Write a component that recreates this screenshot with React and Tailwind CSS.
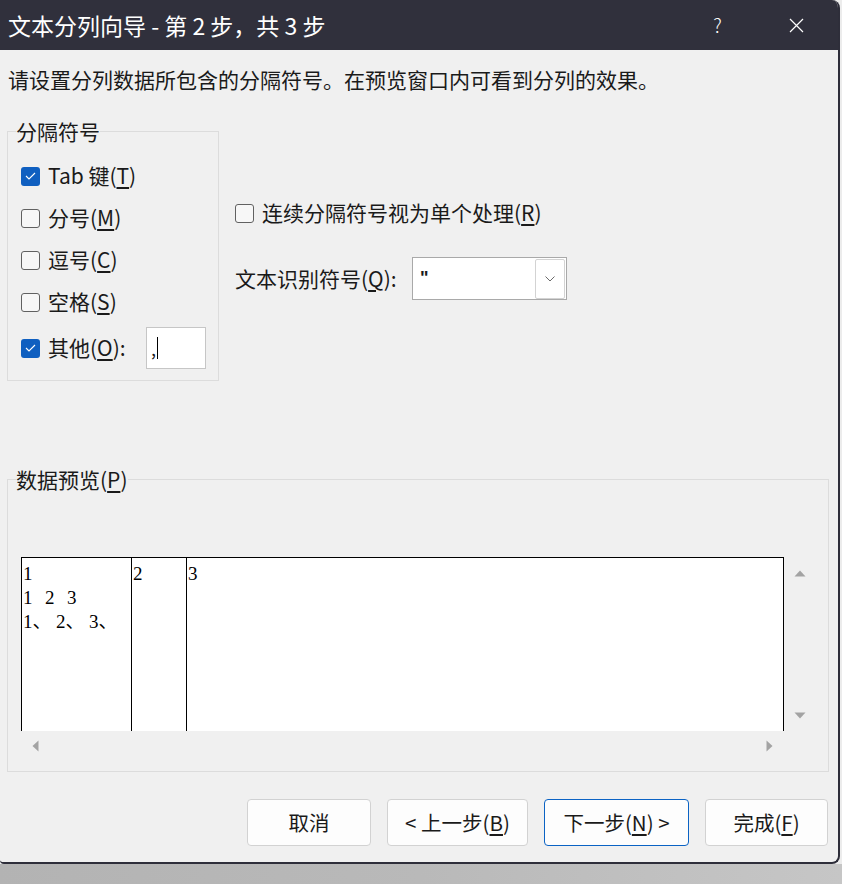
import React from "react";

const Check = ({ checked }) =>
  checked ? (
    <span className="w-[19px] h-[19px] shrink-0 rounded-[3px] bg-[#0f5fc0] flex items-center justify-center">
      <svg width="11" height="8" viewBox="0 0 11 8">
        <path d="M1 4l3 3 6-6" stroke="white" fill="none" strokeWidth="1.1" />
      </svg>
    </span>
  ) : (
    <span className="w-[19px] h-[19px] shrink-0 rounded-[3px] border border-[#616161] bg-[#f7f7f7]" />
  );

const Key = ({ k }) => <u className="underline-offset-[3px]">{k}</u>;

const Btn = ({ w, primary, children }) => (
  <button
    className={
      "h-[47px] rounded-[4px] bg-[#fdfdfd] text-[20.5px] text-[#1a1a1a] flex items-center justify-center border " +
      w +
      (primary ? " border-[#0b63c4]" : " border-[#d2d2d2]")
    }
  >
    {children}
  </button>
);

export default function App() {
  return (
    <div className="w-[842px] h-[884px] bg-[#ececec] flex flex-col font-['Noto_Sans_CJK_SC',sans-serif] text-[#1a1a1a]">
      <div className="w-[840px] h-[864px] shrink-0 flex flex-col bg-[#f0f0f0] border-r-2 border-b-2 border-[#2e2e3a] rounded-tr-[8px] rounded-br-[8px] rounded-bl-[4px] overflow-hidden">
        {/* Title bar */}
        <div className="h-[50px] shrink-0 bg-[#30303c] flex items-center pl-[8px] text-white">
          <span className="text-[23px] leading-none">文本分列向导 - 第 2 步，共 3 步</span>
          <div className="ml-auto flex pr-[2px] h-full">
            <div className="w-[79px] flex items-center justify-center text-[19px] font-light">?</div>
            <div className="w-[79px] flex items-center justify-center">
              <svg width="15" height="15" viewBox="0 0 15 15">
                <path d="M1 1l13 13M14 1L1 14" stroke="white" strokeWidth="1.2" />
              </svg>
            </div>
          </div>
        </div>

        <p className="pl-[8px] pt-[17px] text-[21px] leading-[24px]">
          请设置分列数据所包含的分隔符号。在预览窗口内可看到分列的效果。
        </p>

        {/* Delimiters */}
        <div className="flex mt-[28px] pl-[7px]">
          <fieldset className="w-[212px] border border-[#dcdcdc] pt-[12px] pb-[11px] pl-[13px] pr-[12px]">
            <legend className="-ml-[5px] text-[21px] leading-[24px] px-0">分隔符号</legend>
            <div className="h-[42px] flex items-center gap-[8px] text-[21px]">
              <Check checked />
              <span>
                Tab 键(<Key k="T" />)
              </span>
            </div>
            <div className="h-[42px] flex items-center gap-[8px] text-[21px]">
              <Check />
              <span>
                分号(<Key k="M" />)
              </span>
            </div>
            <div className="h-[42px] flex items-center gap-[8px] text-[21px]">
              <Check />
              <span>
                逗号(<Key k="C" />)
              </span>
            </div>
            <div className="h-[42px] flex items-center gap-[8px] text-[21px]">
              <Check />
              <span>
                空格(<Key k="S" />)
              </span>
            </div>
            <div className="h-[42px] mt-[4px] flex items-center gap-[8px] text-[21px]">
              <Check checked />
              <span>
                其他(<Key k="O" />):
              </span>
              <div className="ml-auto w-[60px] h-[42px] bg-white border border-[#c6c6c6] flex items-center pl-[4px] text-[18px]">
                <span>,</span>
                <span className="w-px h-[22px] bg-black ml-[1px]" />
              </div>
            </div>
          </fieldset>

          <div className="ml-[16px] flex flex-col text-[21px]">
            <div className="mt-[82px] h-[24px] flex items-center gap-[8px]">
              <Check />
              <span>
                连续分隔符号视为单个处理(<Key k="R" />)
              </span>
            </div>
            <div className="mt-[32px] flex items-center">
              <span className="w-[177px]">
                文本识别符号(<Key k="Q" />):
              </span>
              <div className="w-[155px] h-[43px] bg-white border border-[#a9a9a9] flex items-center pl-[7px]">
                <span className="text-[18px] font-['Liberation_Sans',sans-serif] font-bold">"</span>
                <div className="ml-auto mr-[1px] w-[30px] h-[40px] border border-[#d3d3d3] rounded-[2px] flex items-center justify-center">
                  <svg width="10" height="6" viewBox="0 0 10 6">
                    <path d="M0.5 0.5l4.5 4.5 4.5-4.5" stroke="#6b6b6b" fill="none" strokeWidth="1" />
                  </svg>
                </div>
              </div>
            </div>
          </div>
        </div>

        {/* Data preview */}
        <fieldset className="mt-[86px] ml-[7px] w-[822px] border border-[#dcdcdc] pt-[66px] pb-[10px] pl-[13px]">
          <legend className="-ml-[5px] text-[21px] leading-[24px] px-0">
            数据预览(<Key k="P" />)
          </legend>
          <div className="grid grid-cols-[763px_31px] grid-rows-[174px_30px]">
            <div className="bg-white border-t border-l border-r border-black flex font-['Liberation_Serif','Noto_Sans_CJK_SC',serif] text-[19px] leading-[24px] text-black">
              <div className="w-[110px] border-r border-black pl-[1px] pt-[4px]">
                <div>1</div>
                <div className="flex">
                  <span className="w-[22px]">1</span>
                  <span className="w-[22px]">2</span>
                  <span className="w-[22px]">3</span>
                </div>
                <div className="flex">
                  <span className="w-[33px]">1、</span>
                  <span className="w-[33px]">2、</span>
                  <span className="w-[33px]">3、</span>
                </div>
              </div>
              <div className="w-[55px] border-r border-black pl-[1px] pt-[4px]">2</div>
              <div className="flex-1 pl-[1px] pt-[4px]">3</div>
            </div>
            <div className="flex flex-col items-center justify-between pt-[13px] pb-[12px]">
              <svg width="12" height="7" viewBox="0 0 12 7">
                <path d="M6 0.5L11.5 6.5H0.5Z" fill="#a3a3a3" />
              </svg>
              <svg width="12" height="7" viewBox="0 0 12 7">
                <path d="M0.5 0.5H11.5L6 6.5Z" fill="#a3a3a3" />
              </svg>
            </div>
            <div className="flex items-center justify-between pl-[11px] pr-[11px]">
              <svg width="7" height="12" viewBox="0 0 7 12">
                <path d="M0.5 6L6.5 0.5V11.5Z" fill="#a3a3a3" />
              </svg>
              <svg width="7" height="12" viewBox="0 0 7 12">
                <path d="M0.5 0.5L6.5 6L0.5 11.5Z" fill="#a3a3a3" />
              </svg>
            </div>
            <div />
          </div>
        </fieldset>

        {/* Buttons */}
        <div className="mt-[27px] flex justify-end gap-[16px] pr-[10px]">
          <Btn w="w-[124px]">取消</Btn>
          <Btn w="w-[141px]">
            &lt; 上一步(<Key k="B" />)
          </Btn>
          <Btn w="w-[145px]" primary>
            下一步(<Key k="N" />) &gt;
          </Btn>
          <Btn w="w-[123px]">
            完成(<Key k="F" />)
          </Btn>
        </div>
      </div>
      <div className="flex-1 bg-gradient-to-r from-[#b3b3b3] via-[#b9b9b9] to-[#c6c6c6]" />
    </div>
  );
}
